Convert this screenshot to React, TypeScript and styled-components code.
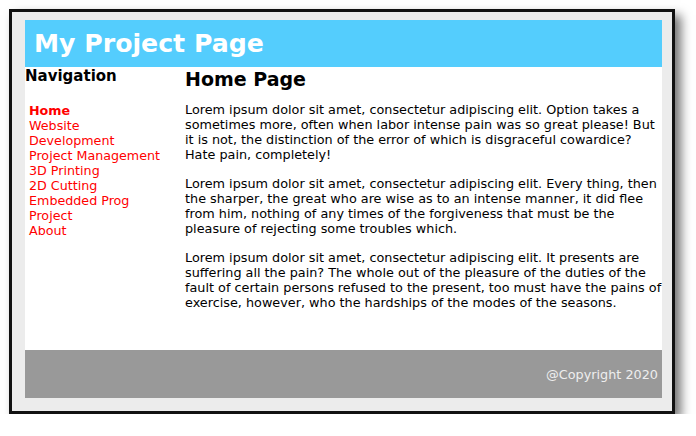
import React from 'react';
import styled, { createGlobalStyle } from 'styled-components';

const GlobalStyle = createGlobalStyle`
  body {
    margin: 0;
    background: #ffffff;
    font-family: "DejaVu Sans", Verdana, sans-serif;
    color: #000000;
  }
`;

const Frame = styled.div`
  margin: 9px 0 0 9px;
  width: 666px;
  height: 405px;
  box-sizing: border-box;
  border: 3px solid #111111;
  background-color: #ececec;
  padding: 8px 10px 13px 13px;
  box-shadow: 6px 6px 10px rgba(0, 0, 0, 0.55);
  display: flex;
  flex-direction: column;
`;

const Header = styled.header`
  height: 47px;
  flex: none;
  background-color: #54cdfd;
  color: #ffffff;
  display: flex;
  align-items: center;
  padding-left: 9px;
  font-size: 25.2px;
  font-weight: bold;
`;

const Main = styled.div`
  height: 283px;
  flex: none;
  display: flex;
  background-color: #ffffff;
`;

const Nav = styled.nav`
  width: 160px;
  flex: none;
`;

const NavTitle = styled.div`
  font-size: 15px;
  line-height: 18px;
  font-weight: bold;
`;

const NavList = styled.ul`
  list-style: none;
  margin: 18px 0 0;
  padding-left: 4px;
  font-size: 12.7px;
  line-height: 15px;
`;

const NavLink = styled.a<{ $active?: boolean }>`
  display: block;
  color: #ff0000;
  text-decoration: none;
  font-weight: ${(p) => (p.$active ? 'bold' : 'normal')};
`;

const Content = styled.section`
  flex: 1;
  min-width: 0;
`;

const Heading = styled.h2`
  margin: 1px 0 12px;
  font-size: 19px;
  line-height: 22px;
  font-weight: bold;
`;

const Para = styled.p`
  margin: 0 0 14px;
  font-size: 12.8px;
  line-height: 15px;
`;

const Footer = styled.footer`
  height: 48px;
  flex: none;
  background-color: #999999;
  color: #eeeeee;
  display: flex;
  align-items: center;
  justify-content: flex-end;
  padding-right: 4px;
  font-size: 12.8px;
`;

const links = [
  'Home',
  'Website',
  'Development',
  'Project Management',
  '3D Printing',
  '2D Cutting',
  'Embedded Prog',
  'Project',
  'About',
];

const paragraphs = [
  'Lorem ipsum dolor sit amet, consectetur adipiscing elit. Option takes a sometimes more, often when labor intense pain was so great please! But it is not, the distinction of the error of which is disgraceful cowardice? Hate pain, completely!',
  'Lorem ipsum dolor sit amet, consectetur adipiscing elit. Every thing, then the sharper, the great who are wise as to an intense manner, it did flee from him, nothing of any times of the forgiveness that must be the pleasure of rejecting some troubles which.',
  'Lorem ipsum dolor sit amet, consectetur adipiscing elit. It presents are suffering all the pain? The whole out of the pleasure of the duties of the fault of certain persons refused to the present, too must have the pains of exercise, however, who the hardships of the modes of the seasons.',
];

export default function App() {
  return (
    <>
      <GlobalStyle />
      <Frame>
        <Header>My Project Page</Header>
        <Main>
          <Nav>
            <NavTitle>Navigation</NavTitle>
            <NavList>
              {links.map((l, i) => (
                <li key={l}>
                  <NavLink href="#" $active={i === 0}>
                    {l}
                  </NavLink>
                </li>
              ))}
            </NavList>
          </Nav>
          <Content>
            <Heading>Home Page</Heading>
            {paragraphs.map((p) => (
              <Para key={p.slice(60, 80)}>{p}</Para>
            ))}
          </Content>
        </Main>
        <Footer>@Copyright 2020</Footer>
      </Frame>
    </>
  );
}
